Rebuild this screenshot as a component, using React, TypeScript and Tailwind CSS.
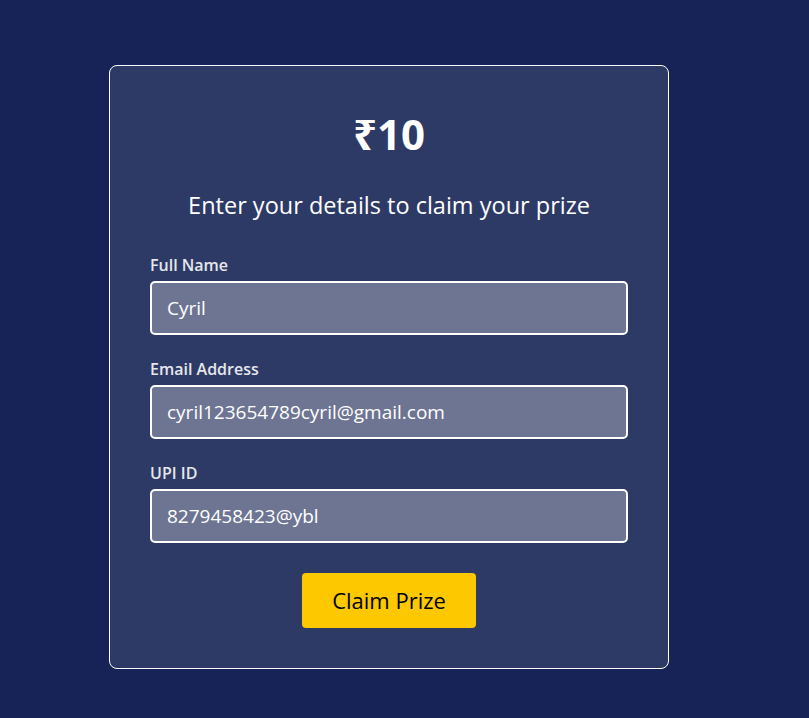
import React from "react";

export default function App() {
  const font = { fontFamily: '"Open Sans", "Noto Sans", sans-serif' };
  const fields = [
    { label: "Full Name", value: "Cyril" },
    { label: "Email Address", value: "cyril123654789cyril@gmail.com" },
    { label: "UPI ID", value: "8279458423@ybl" },
  ];
  return (
    <div className="min-h-[718px] w-full bg-[#172357] pt-[65px] pb-[50px]" style={font}>
      <div className="ml-[109px] w-[560px] h-[604px] rounded-[8px] border border-white bg-[#2e3a66] px-[40px] pt-[40px] flex flex-col">
        <div className="text-center text-[42px] font-bold text-white leading-[56px]">₹10</div>
        <div className="mt-[27px] text-center text-[23.5px] text-white leading-[32px]">
          Enter your details to claim your prize
        </div>
        <div className="mt-[33px] flex flex-col gap-[23px]">
          {fields.map((f) => (
            <div key={f.label} className="flex flex-col">
              <label className="text-[16px] font-semibold text-[#e5e7eb] leading-[22px] mb-[5px]">{f.label}</label>
              <div className="h-[54px] rounded-[5px] border-2 border-white bg-[#6d7592] px-[15px] flex items-center text-[19px] text-white">
                {f.value}
              </div>
            </div>
          ))}
        </div>
        <div className="mt-[30px] flex justify-center">
          <button className="w-[174px] h-[55px] rounded-[4px] bg-[#fdc800] text-[22px] font-medium text-black" style={font}>
            Claim Prize
          </button>
        </div>
      </div>
    </div>
  );
}
